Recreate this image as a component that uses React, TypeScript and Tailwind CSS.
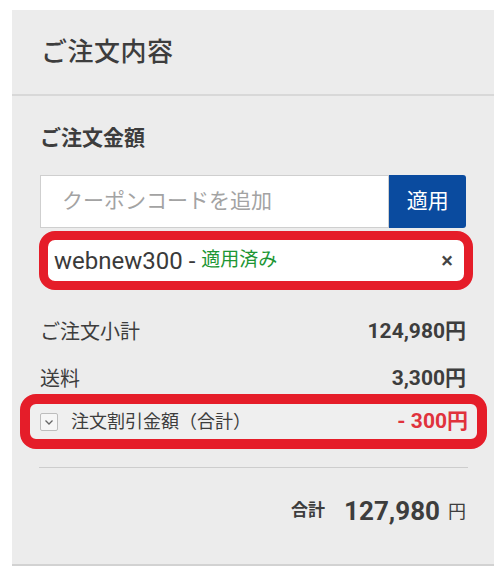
const JP = "font-['Roboto','Noto_Sans_CJK_JP',sans-serif]";

export default function App() {
  return (
    <div className={`w-[500px] h-[570px] bg-white pt-[10px] pl-[12px] ${JP} text-[#3d3d3d]`}>
      <div className="w-[482px] h-[556px] bg-[#ececec] border-b-2 border-[#d2d2d2] flex flex-col">
        {/* header */}
        <div className="h-[86px] shrink-0 border-b-2 border-[#d8d8d8] flex items-center px-[29px]">
          <h1 className="text-[26px] font-medium tracking-[0.5px]">ご注文内容</h1>
        </div>

        <div className="px-[28px]">
          <h2 className="mt-[28px] h-[28px] leading-[28px] text-[21px] font-bold">ご注文金額</h2>

          {/* coupon input */}
          <div className="mt-[23px] flex h-[53px]">
            <div className="w-[351px] bg-white border border-[#cfcfcf] flex items-center pl-[21px] text-[21px] text-[#a3a3a3]">
              クーポンコードを追加
            </div>
            <button className="w-[77px] bg-[#0a4b9f] rounded-r-[3px] text-white text-[21px]">適用</button>
          </div>

          {/* applied coupon */}
          <div className="mt-[3px] ml-[-1px] w-[434px] h-[59px] border-[9px] border-[#e51d29] rounded-[16px] bg-white flex items-center pl-[6px] pr-[11px]">
            <span className="text-[24px] text-[#3a3a3a]">webnew300 -&nbsp;</span>
            <span className="text-[19px] text-[#1d9634]">適用済み</span>
            <span className="ml-auto text-[22px] font-medium text-[#444]">×</span>
          </div>

          {/* rows */}
          <div className="mt-[28px] h-[28px] flex items-center justify-between text-[20px]">
            <span>ご注文小計</span>
            <span className="font-bold text-[21px]">124,980円</span>
          </div>
          <div className="mt-[19px] h-[28px] flex items-center justify-between text-[20px]">
            <span>送料</span>
            <span className="font-bold text-[21px]">3,300円</span>
          </div>

          <div className="mt-[1px] ml-[-20px] w-[467px] h-[55px] border-[10px] border-[#e51d29] rounded-[16px] bg-[#efefef] flex items-center pl-[10px] pr-[9px]">
            <span className="w-[18px] h-[18px] border border-[#bdbdbd] bg-[#f6f6f6] rounded-[2px] flex items-center justify-center">
              <svg width="12" height="12" viewBox="0 0 12 12" fill="none" stroke="#666" strokeWidth="1.3">
                <path d="M2.5 4.5 6 8l3.5-3.5" />
              </svg>
            </span>
            <span className="ml-[13px] text-[18px]">注文割引金額（合計）</span>
            <span className="ml-auto text-[21px] font-bold text-[#e0323c]">- 300円</span>
          </div>

          <div className="mt-[18px] ml-[-1px] w-[429px] border-t border-[#cdcdcd]" />

          <div className="mt-[25px] h-[36px] flex items-center justify-end">
            <span className="text-[17px] font-bold">合計</span>
            <span className="ml-[19px] text-[26px] font-bold">127,980</span>
            <span className="ml-[8px] text-[18px]">円</span>
          </div>
        </div>
      </div>
    </div>
  );
}
